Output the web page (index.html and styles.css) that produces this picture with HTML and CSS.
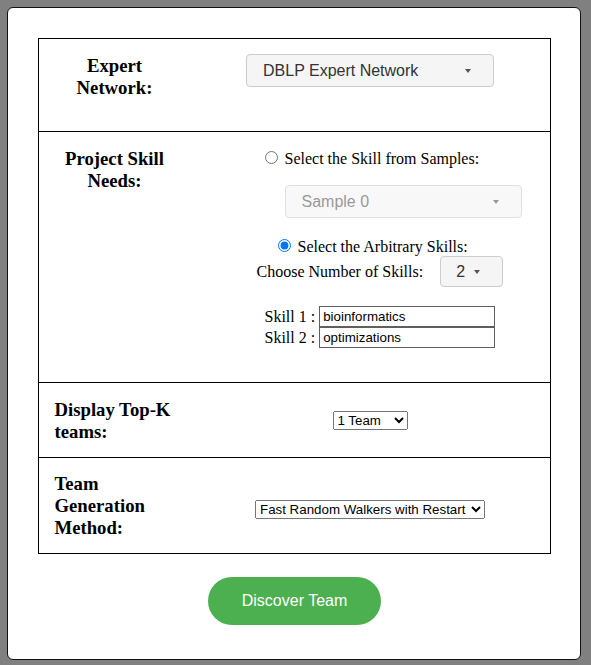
FILE: index.html
```html
<!DOCTYPE html>
<html lang="en">
<head>
<meta charset="utf-8">
<title>Team Discovery</title>
<link rel="stylesheet" href="styles.css">
</head>
<body>
<div class="card">
  <div class="form-table">
    <div class="row row-network">
      <div class="label label-center">Expert<br>Network:</div>
      <div class="field">
        <div class="picker picker-network"><span>DBLP Expert Network</span><i class="caret"></i></div>
      </div>
    </div>
    <div class="row row-skills">
      <div class="label label-center">Project Skill<br>Needs:</div>
      <div class="field field-skills">
        <label class="choice choice-sample"><input type="radio" name="mode"> Select the Skill from Samples:</label>
        <div class="picker picker-sample"><span>Sample 0</span><i class="caret"></i></div>
        <label class="choice choice-arbitrary"><input type="radio" name="mode" checked> Select the Arbitrary Skills:</label>
        <div class="count-line">
          <span>Choose Number of Skills:</span>
          <div class="picker picker-count"><span>2</span><i class="caret"></i></div>
        </div>
        <div class="skill-list">
          <div class="skill-line">Skill 1 : <input type="text" class="skill-input" value="bioinformatics"></div>
          <div class="skill-line">Skill 2 : <input type="text" class="skill-input" value="optimizations"></div>
        </div>
      </div>
    </div>
    <div class="row row-topk">
      <div class="label">Display Top-K<br>teams:</div>
      <div class="field field-topk">
        <select class="native-select select-topk">
          <option>1 Team</option>
          <option>2 Teams</option>
          <option>3 Teams</option>
        </select>
      </div>
    </div>
    <div class="row row-method">
      <div class="label">Team<br>Generation<br>Method:</div>
      <div class="field field-method">
        <select class="native-select select-method">
          <option>Fast Random Walkers with Restart</option>
        </select>
      </div>
    </div>
  </div>
  <div class="actions">
    <button type="button" class="discover">Discover Team</button>
  </div>
</div>
</body>
</html>
```

FILE: styles.css
```css
html, body {
  margin: 0;
  padding: 0;
}

body {
  background: #808080;
  padding: 7px 10px 0 7px;
  font-family: "Liberation Serif", "Times New Roman", serif;
  font-size: 16px;
  color: #000;
}

.card {
  width: 572px;
  height: 621px;
  background: #fff;
  border: 1px solid #111;
  border-radius: 6px;
  padding-top: 30px;
  box-sizing: content-box;
}

.form-table {
  width: 511px;
  margin: 0 auto;
  border: 1px solid #000;
}

.row {
  display: grid;
  grid-template-columns: 152px 1fr;
}

.row + .row {
  border-top: 1px solid #000;
}

.row-network { height: 92px; }
.row-skills { height: 250px; }
.row-topk { height: 74px; }
.row-method { height: 95px; }

.label {
  font-weight: bold;
  font-size: 18.72px;
  line-height: 22px;
  padding: 0 16px;
}

.label-center {
  text-align: center;
}

.row-network .label { padding-top: 16px; }
.row-skills .label { padding-top: 16px; }
.row-topk .label { padding-top: 16px; }
.row-method .label { padding-top: 15px; }

.field {
  display: flex;
  flex-direction: column;
  align-items: center;
}

.row-network .field { padding-top: 15px; }

.picker {
  display: flex;
  align-items: center;
  justify-content: space-between;
  box-sizing: border-box;
  font-family: "Liberation Sans", Arial, sans-serif;
  font-size: 16px;
  color: #333;
  background: #f5f5f5;
  border: 1px solid #ccc;
  border-radius: 4px;
}

.caret {
  display: block;
  width: 0;
  height: 0;
  border-top: 4px solid #555;
  border-left: 3.5px solid transparent;
  border-right: 3.5px solid transparent;
}

.picker-network {
  width: 248px;
  height: 33px;
  padding: 0 22px 0 16px;
}

.field-skills {
  align-items: flex-start;
}

.choice {
  display: block;
  line-height: 18px;
}

.choice input {
  margin: 3px 3px 0 5px;
}

.choice-sample {
  margin: 16px 0 0 69px;
}

.picker-sample {
  width: 237px;
  height: 33px;
  margin: 17px 0 0 94px;
  padding: 0 22px 0 16px;
  opacity: 0.6;
  color: #555;
}

.choice-arbitrary {
  margin: 18px 0 0 82px;
}

.count-line {
  display: flex;
  align-items: center;
  margin-left: 66px;
}

.picker-count {
  width: 63px;
  height: 31px;
  margin-left: 17px;
  padding: 0 22px 0 15px;
}

.skill-list {
  margin: 19px 0 0 74px;
}

.skill-line {
  height: 21px;
  line-height: 21px;
  white-space: nowrap;
}

.skill-input {
  box-sizing: border-box;
  width: 176px;
  height: 21px;
  margin: 0;
  padding: 1px 3px;
  border: 1px solid #5f5f5f;
  font-family: "Liberation Sans", Arial, sans-serif;
  font-size: 13.333px;
  color: #000;
  vertical-align: top;
}

.native-select {
  font-family: "Liberation Sans", Arial, sans-serif;
  font-size: 13.333px;
  color: #000;
  margin: 0;
}

.field-topk { padding-top: 28px; }
.select-topk { width: 75px; }

.field-method { padding-top: 42px; }
.select-method { width: 230px; }

.actions {
  display: flex;
  justify-content: center;
  margin-top: 23px;
}

.discover {
  width: 173px;
  height: 48px;
  border: none;
  border-radius: 24px;
  background: #4caf50;
  color: #fff;
  font-family: "Liberation Sans", Arial, sans-serif;
  font-size: 16px;
  padding: 0;
  margin-left: 1px;
}
```
